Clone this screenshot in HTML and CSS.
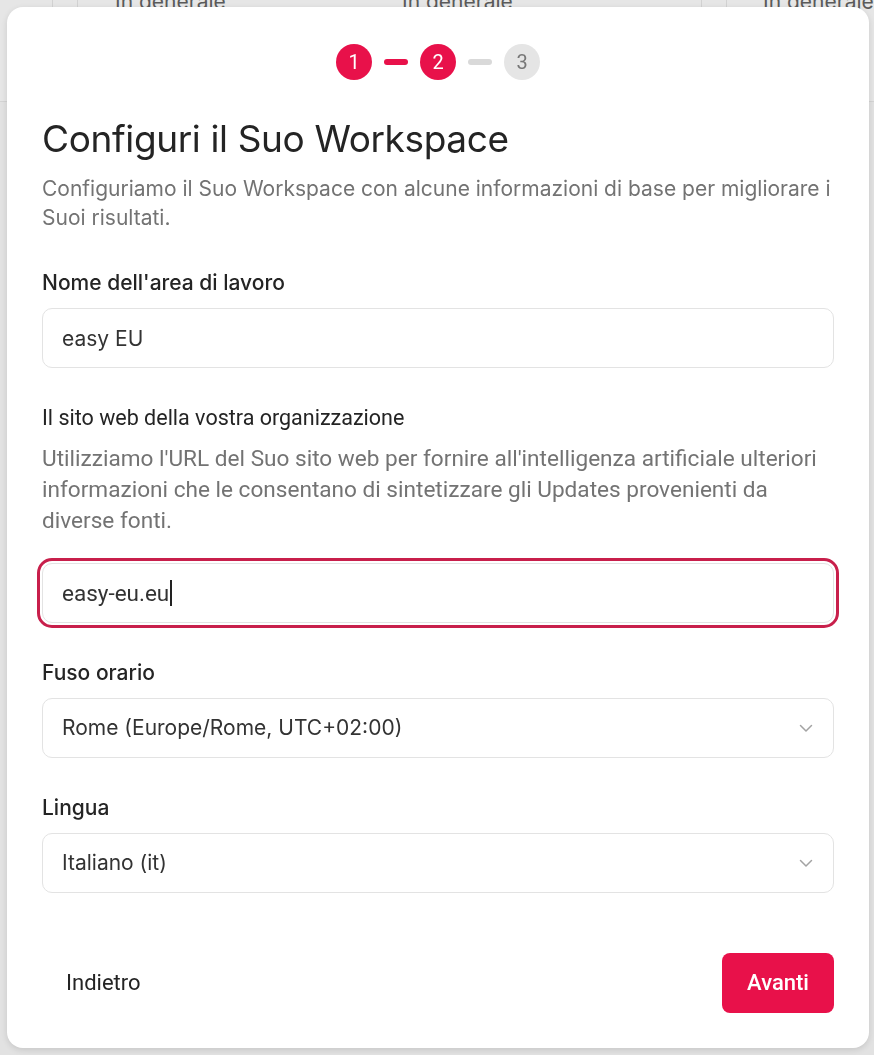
FILE: index.html
```html
<!DOCTYPE html>
<html lang="it">
<head>
    <meta charset="UTF-8">
    <meta name="viewport" content="width=device-width, initial-scale=1.0">
    <title>Configuri il Suo Workspace</title>
    <link rel="stylesheet" href="styles.css">
</head>
<body>
    <!-- page behind the dialog -->
    <div class="backdrop">
        <div class="table-head">
            <div class="cell cell-first"></div>
            <div class="cell cell-narrow"></div>
            <div class="cell cell-wide">In generale</div>
            <div class="cell cell-mid">In generale</div>
            <div class="cell cell-narrow"></div>
            <div class="cell cell-end">In generale</div>
        </div>
    </div>

    <div class="modal">
        <div class="stepper">
            <span class="step done">1</span>
            <span class="step-line done"></span>
            <span class="step done">2</span>
            <span class="step-line"></span>
            <span class="step">3</span>
        </div>

        <h1>Configuri il Suo Workspace</h1>
        <p class="intro">Configuriamo il Suo Workspace con alcune informazioni di base per migliorare i Suoi risultati.</p>

        <form class="fields" onsubmit="return false">
            <div class="form-group">
                <label for="workspaceName">Nome dell'area di lavoro</label>
                <input type="text" id="workspaceName" value="easy EU">
            </div>

            <div class="form-group">
                <label for="website" class="alt">Il sito web della vostra organizzazione</label>
                <p class="hint alt">Utilizziamo l'URL del Suo sito web per fornire all'intelligenza artificiale ulteriori informazioni che le consentano di sintetizzare gli Updates provenienti da diverse fonti.</p>
                <div class="input focused alt" id="website">easy-eu.eu<span class="caret"></span></div>
            </div>

            <div class="form-group">
                <label for="timezone">Fuso orario</label>
                <div class="select" id="timezone">
                    <span>Rome (Europe/Rome, UTC+02:00)</span>
                    <svg class="chevron" viewBox="0 0 16 16" width="16" height="16"><path d="M2.5 5.5 8 11l5.5-5.5" fill="none" stroke="#a3a3a3" stroke-width="1.5" stroke-linecap="round" stroke-linejoin="round"/></svg>
                </div>
            </div>

            <div class="form-group">
                <label for="language">Lingua</label>
                <div class="select" id="language">
                    <span>Italiano (it)</span>
                    <svg class="chevron" viewBox="0 0 16 16" width="16" height="16"><path d="M2.5 5.5 8 11l5.5-5.5" fill="none" stroke="#a3a3a3" stroke-width="1.5" stroke-linecap="round" stroke-linejoin="round"/></svg>
                </div>
            </div>
        </form>

        <div class="actions">
            <button type="button" class="btn-back">Indietro</button>
            <button type="button" class="btn-next">Avanti</button>
        </div>
    </div>
</body>
</html>
```

FILE: styles.css
```css
:root {
    --brand: #e8114a;
    --ring: #c81f4b;
    --text-color: #242424;
    --text-light: #737373;
    --border-color: #e3e3e3;
    --white: #ffffff;
    --font-family: 'Inter', 'Noto Sans', sans-serif;
    --font-alt: 'Roboto', 'Liberation Sans', sans-serif;
}

* {
    margin: 0;
    padding: 0;
    box-sizing: border-box;
}

body {
    min-height: 100vh;
    background: #e2e2e2;
    font-family: var(--font-family);
    color: var(--text-color);
    overflow: hidden;
}

.alt {
    font-family: var(--font-alt);
}

/* page behind the overlay */
.table-head {
    display: flex;
    height: 102px;
    background: #e6e6e6;
    border-bottom: 1px solid #d4d4d4;
}

.cell {
    flex: none;
    border-right: 1px solid #d2d2d2;
    color: #5a5a5a;
    font-size: 21px;
    line-height: 1;
    margin-top: -9px;
}

.cell-first {
    width: 53px;
}

.cell-narrow {
    width: 25px;
}

.cell-wide {
    width: 287px;
    padding-left: 37px;
    border-right: none;
}

.cell-mid {
    width: 337px;
    padding-left: 37px;
}

.cell-end {
    flex: 1;
    padding-left: 36px;
    border-right: none;
}

/* dialog */
.modal {
    position: fixed;
    top: 7px;
    left: 7px;
    width: 862px;
    background: var(--white);
    border-radius: 16px;
    box-shadow: 0 2px 6px rgba(0, 0, 0, 0.12);
    padding: 37px 35px 35px;
}

.stepper {
    display: flex;
    justify-content: center;
    align-items: center;
    gap: 12px;
    height: 36px;
}

.step {
    width: 36px;
    height: 36px;
    border-radius: 50%;
    display: flex;
    align-items: center;
    justify-content: center;
    background: #e5e5e5;
    color: #777;
    font-family: var(--font-alt);
    font-size: 20px;
}

.step.done {
    background: var(--brand);
    color: var(--white);
}

.step-line {
    width: 24px;
    height: 6px;
    border-radius: 3px;
    background: #d9d9d9;
}

.step-line.done {
    background: var(--brand);
}

h1 {
    margin-top: 38px;
    font-size: 37px;
    line-height: 42px;
    font-weight: 400;
    letter-spacing: -0.01em;
    color: var(--text-color);
}

.intro {
    margin-top: 14px;
    font-size: 21px;
    line-height: 29px;
    color: var(--text-light);
}

.fields {
    display: flex;
    flex-direction: column;
    gap: 38px;
    margin-top: 39px;
}

label {
    display: block;
    font-size: 21px;
    line-height: 24px;
    font-weight: 500;
    color: var(--text-color);
    margin-bottom: 13px;
}

label.alt {
    font-size: 21.5px;
    font-weight: 400;
}

.hint {
    font-size: 22.6px;
    line-height: 31px;
    color: var(--text-light);
    margin-bottom: 27px;
    margin-top: -0.5px;
}

input,
.input,
.select {
    display: flex;
    align-items: center;
    width: 100%;
    height: 60px;
    padding: 0 19px;
    border: 1px solid var(--border-color);
    border-radius: 10px;
    font-family: var(--font-family);
    font-size: 21px;
    color: #333;
    background: var(--white);
    outline: none;
}

.input.focused {
    font-family: var(--font-alt);
    font-size: 22.5px;
    outline: 3px solid var(--ring);
    outline-offset: 2px;
}

.caret {
    display: inline-block;
    width: 2px;
    height: 26px;
    background: #222;
    margin-left: 1px;
}

.select {
    justify-content: space-between;
    padding-right: 19px;
}

.chevron {
    flex: none;
}

.actions {
    display: flex;
    justify-content: space-between;
    align-items: center;
    margin-top: 60px;
}

button {
    font-family: var(--font-alt);
    font-size: 22px;
    border: none;
    cursor: pointer;
    height: 60px;
    border-radius: 8px;
}

.btn-back {
    background: none;
    color: var(--text-color);
    padding: 0 24px;
}

.btn-next {
    background: var(--brand);
    color: var(--white);
    font-weight: 500;
    width: 112px;
}
```
